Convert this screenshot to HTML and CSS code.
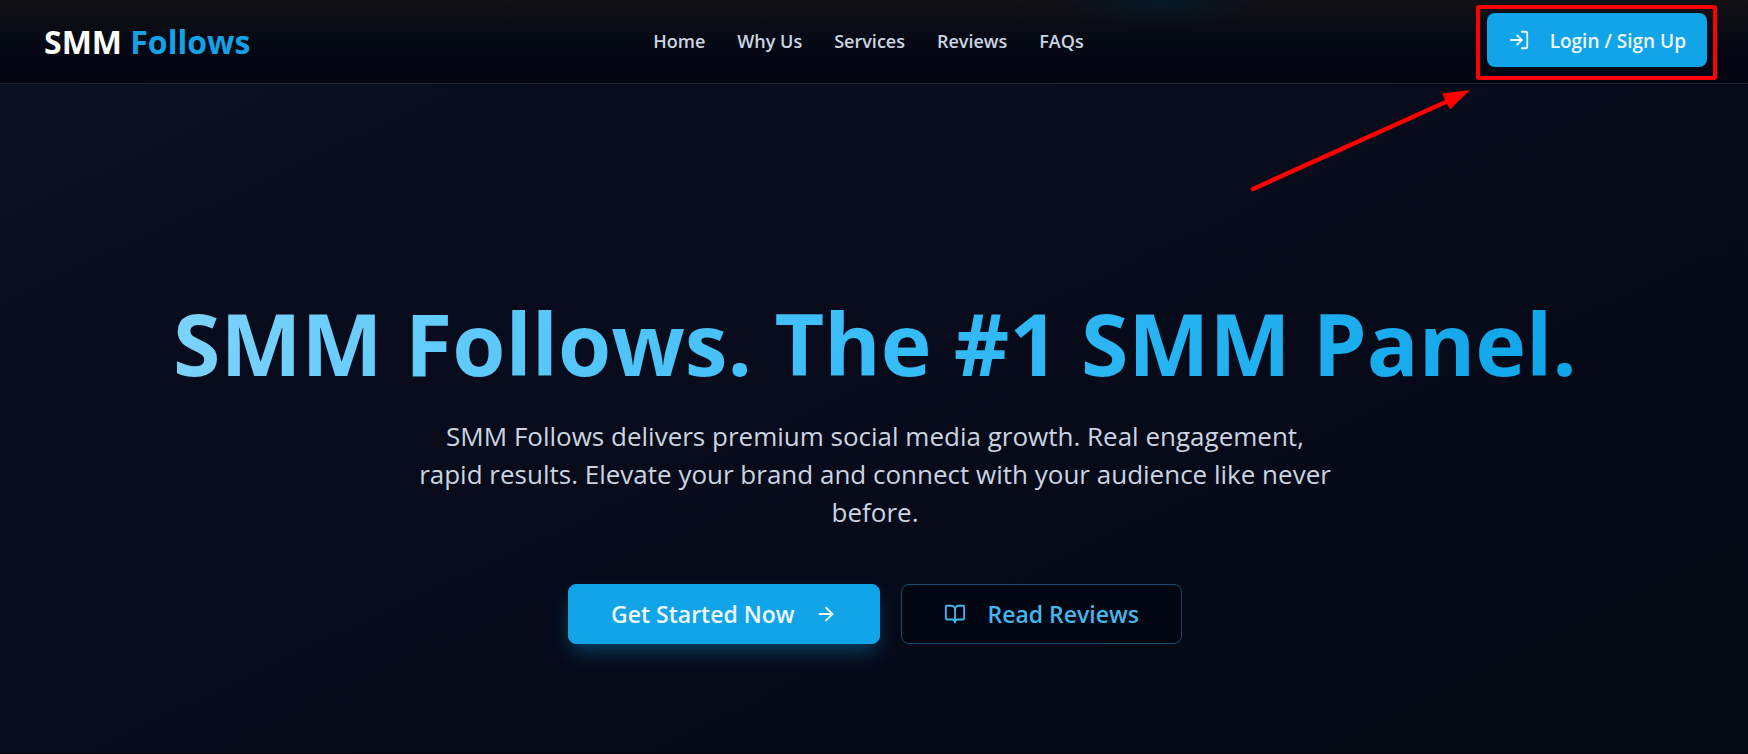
FILE: index.html
```
<!DOCTYPE html>
<html lang="en">
<head>
<meta charset="utf-8">
<meta name="viewport" content="width=device-width, initial-scale=1">
<title>SMM Follows</title>
<link rel="stylesheet" href="styles.css">
</head>
<body>
<header class="site-header">
  <a class="logo" href="#">SMM <span class="logo-accent">Follows</span></a>
  <nav class="site-nav" aria-label="Main">
    <a href="#">Home</a>
    <a href="#">Why Us</a>
    <a href="#">Services</a>
    <a href="#">Reviews</a>
    <a href="#">FAQs</a>
  </nav>
  <div class="login-wrap">
    <button class="button button-login" type="button">
      <svg class="icon" viewBox="0 0 24 24" aria-hidden="true"><path d="M15 3h4a2 2 0 0 1 2 2v14a2 2 0 0 1-2 2h-4"/><path d="m10 17 5-5-5-5"/><path d="M15 12H3"/></svg>
      <span class="login-label">Login / Sign Up</span>
    </button>
    <span class="callout-box"></span>
    <svg class="callout-arrow" viewBox="0 0 226 106" aria-hidden="true"><path class="arrow-shaft" d="M5 101 200 13"/><path class="arrow-head" d="M222 2 194 5.500 198 14 202 21.500Z"/></svg>
  </div>
</header>
<main class="hero">
  <h1 class="hero-title">SMM Follows. The #1 SMM Panel.</h1>
  <p class="hero-text">SMM Follows delivers premium social media growth. Real engagement, rapid results. Elevate your brand and connect with your audience like never before.</p>
  <div class="hero-actions">
    <button class="button button-primary" type="button">
      Get Started Now
      <svg class="icon" viewBox="0 0 24 24" aria-hidden="true"><path d="M5 12h14"/><path d="m12 5 7 7-7 7"/></svg>
    </button>
    <button class="button button-outline" type="button">
      <svg class="icon" viewBox="0 0 24 24" aria-hidden="true"><path d="M12 7v14"/><path d="M3 18a1 1 0 0 1-1-1V4a1 1 0 0 1 1-1h5a4 4 0 0 1 4 4 4 4 0 0 1 4-4h5a1 1 0 0 1 1 1v13a1 1 0 0 1-1 1h-6a3 3 0 0 0-3 3 3 3 0 0 0-3-3z"/></svg>
      Read Reviews
    </button>
  </div>
</main>
</body>
</html>
```
FILE: styles.css
```
* {
  box-sizing: border-box;
}

body {
  margin: 0;
  min-height: 100vh;
  display: flex;
  flex-direction: column;
  background: #020617;
  color: #cbd5e1;
  font-family: "Segoe UI", "Open Sans", "Noto Sans", sans-serif;
}

.site-header {
  display: flex;
  justify-content: space-between;
  align-items: center;
  padding: 13px 41px 16px 44px;
  border-bottom: 1px solid #1e2433;
  background:
    radial-gradient(ellipse 100px 28px at 1160px 0, rgba(3, 26, 42, 0.9), transparent),
    linear-gradient(#121115 0, #0e0e14 16px, #060a15 36px, #040613 64px, #040612 100%);
}

.logo {
  padding-top: 4px;
  color: #fff;
  font-size: 32px;
  line-height: 40px;
  font-weight: 700;
  text-decoration: none;
}

.logo-accent {
  color: #14a1e6;
}

.site-nav {
  display: flex;
  gap: 32px;
  padding-top: 2px;
}

.site-nav a {
  color: #cbd5e1;
  font-size: 18px;
  line-height: 28px;
  font-weight: 600;
  text-decoration: none;
}

.login-wrap {
  position: relative;
}

.button {
  display: inline-flex;
  align-items: center;
  justify-content: center;
  gap: 20px;
  border: 0;
  border-radius: 8px;
  font-family: inherit;
  font-weight: 600;
  cursor: pointer;
}

.icon {
  width: 22px;
  height: 22px;
  flex: none;
  fill: none;
  stroke: currentColor;
  stroke-width: 2;
  stroke-linecap: round;
  stroke-linejoin: round;
}

.button-login {
  padding: 12px 21px;
  background: #11a4e9;
  color: #f0f9ff;
  font-size: 19px;
  line-height: 28px;
}

.login-label {
  padding-top: 2px;
}

.callout-box {
  position: absolute;
  inset: -8px -10px -13px -11px;
  border: 4px solid #f00;
  border-radius: 3px;
  pointer-events: none;
}

.callout-arrow {
  position: absolute;
  top: 75px;
  right: 233px;
  width: 226px;
  height: 106px;
  pointer-events: none;
}

.arrow-shaft {
  fill: none;
  stroke: #f00;
  stroke-width: 4.500;
  stroke-linecap: round;
}

.arrow-head {
  fill: #f00;
}

.hero {
  flex: 1;
  display: flex;
  flex-direction: column;
  align-items: center;
  padding: 211px 24px 96px 26px;
  border-bottom: 1px solid #020410;
  background: linear-gradient(155deg, #0b1222 0, #080c1c 25%, #060a19 60%, #060a14 100%);
  text-align: center;
}

.hero-title {
  margin: 0 0 26px;
  background: linear-gradient(105deg, #7dd3fc, #38bdf8 50%, #0ea5e9);
  background-clip: text;
  -webkit-background-clip: text;
  color: transparent;
  font-size: 86px;
  line-height: 96px;
  font-weight: 700;
}

.hero-text {
  max-width: 920px;
  margin: 0 0 53px;
  color: #cbd5e1;
  font-size: 26px;
  line-height: 38px;
}

.hero-actions {
  display: flex;
  flex-wrap: wrap;
  justify-content: center;
  gap: 21px;
}

.button-primary,
.button-outline {
  padding: 13px 42px;
  border: 1px solid #134e70;
  font-size: 23px;
  line-height: 32px;
}

.button-primary {
  border-color: #11a4e9;
  background: #11a4e9;
  color: #f0f9ff;
  box-shadow: 0 10px 20px -4px rgba(14, 165, 233, 0.4);
}

.button-outline {
  gap: 22px;
  background: #010612;
  color: #45b6ec;
}
```
